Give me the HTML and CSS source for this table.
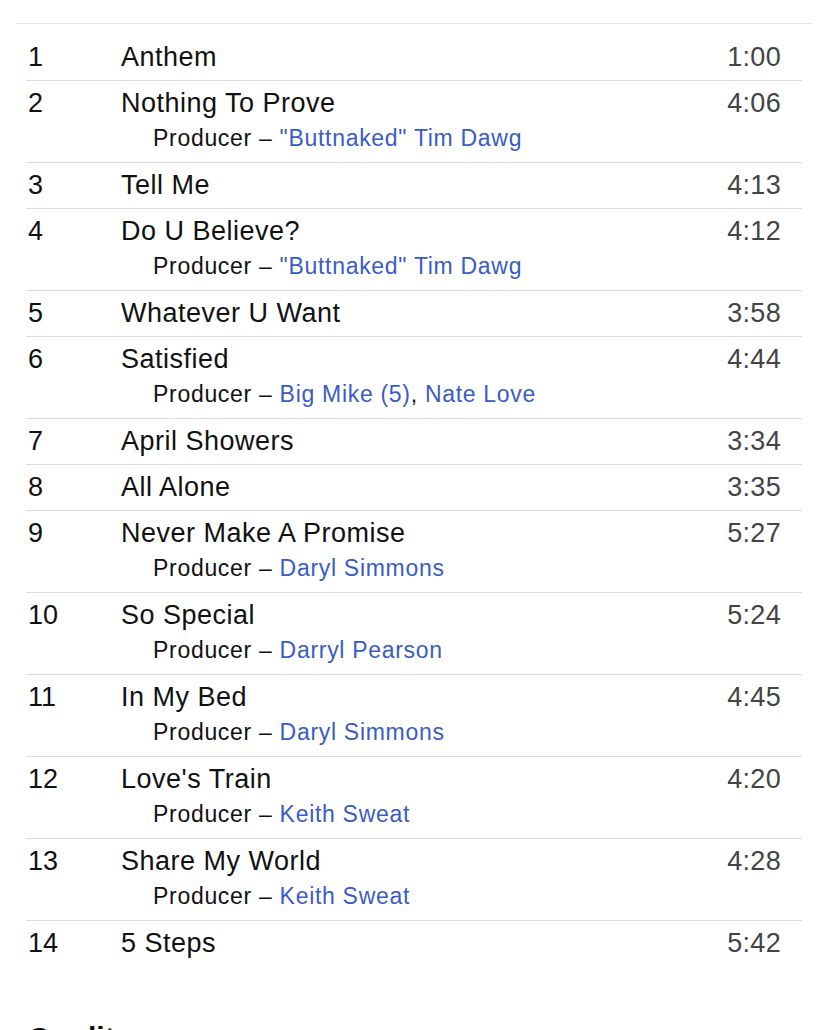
FILE: index.html
```
<!DOCTYPE html>
<html lang="en">
<head>
    <meta charset="UTF-8">
    <meta name="viewport" content="width=device-width, initial-scale=1.0">
    <title>Tracklist</title>
    <link rel="stylesheet" href="styles.css">
</head>
<body>

<div class="tracklist">
    <div class="track">
        <span class="pos">1</span>
        <div class="info"><div class="title">Anthem</div></div>
        <span class="duration">1:00</span>
    </div>
    <div class="track">
        <span class="pos">2</span>
        <div class="info">
            <div class="title">Nothing To Prove</div>
            <div class="credit">Producer – <a href="#">"Buttnaked" Tim Dawg</a></div>
        </div>
        <span class="duration">4:06</span>
    </div>
    <div class="track">
        <span class="pos">3</span>
        <div class="info"><div class="title">Tell Me</div></div>
        <span class="duration">4:13</span>
    </div>
    <div class="track">
        <span class="pos">4</span>
        <div class="info">
            <div class="title">Do U Believe?</div>
            <div class="credit">Producer – <a href="#">"Buttnaked" Tim Dawg</a></div>
        </div>
        <span class="duration">4:12</span>
    </div>
    <div class="track">
        <span class="pos">5</span>
        <div class="info"><div class="title">Whatever U Want</div></div>
        <span class="duration">3:58</span>
    </div>
    <div class="track">
        <span class="pos">6</span>
        <div class="info">
            <div class="title">Satisfied</div>
            <div class="credit">Producer – <a href="#">Big Mike (5)</a>, <a href="#">Nate Love</a></div>
        </div>
        <span class="duration">4:44</span>
    </div>
    <div class="track">
        <span class="pos">7</span>
        <div class="info"><div class="title">April Showers</div></div>
        <span class="duration">3:34</span>
    </div>
    <div class="track">
        <span class="pos">8</span>
        <div class="info"><div class="title">All Alone</div></div>
        <span class="duration">3:35</span>
    </div>
    <div class="track">
        <span class="pos">9</span>
        <div class="info">
            <div class="title">Never Make A Promise</div>
            <div class="credit">Producer – <a href="#">Daryl Simmons</a></div>
        </div>
        <span class="duration">5:27</span>
    </div>
    <div class="track">
        <span class="pos">10</span>
        <div class="info">
            <div class="title">So Special</div>
            <div class="credit">Producer – <a href="#">Darryl Pearson</a></div>
        </div>
        <span class="duration">5:24</span>
    </div>
    <div class="track">
        <span class="pos">11</span>
        <div class="info">
            <div class="title">In My Bed</div>
            <div class="credit">Producer – <a href="#">Daryl Simmons</a></div>
        </div>
        <span class="duration">4:45</span>
    </div>
    <div class="track">
        <span class="pos">12</span>
        <div class="info">
            <div class="title">Love's Train</div>
            <div class="credit">Producer – <a href="#">Keith Sweat</a></div>
        </div>
        <span class="duration">4:20</span>
    </div>
    <div class="track">
        <span class="pos">13</span>
        <div class="info">
            <div class="title">Share My World</div>
            <div class="credit">Producer – <a href="#">Keith Sweat</a></div>
        </div>
        <span class="duration">4:28</span>
    </div>
    <div class="track">
        <span class="pos">14</span>
        <div class="info"><div class="title">5 Steps</div></div>
        <span class="duration">5:42</span>
    </div>
</div>

<div class="credits">
    <h2>Credits</h2>
</div>

</body>
</html>
```

FILE: styles.css
```
body {
    font-family: "Liberation Sans", Arial, sans-serif;
    background-color: white;
    color: #111;
    margin: 0;
    padding: 0;
}

.tracklist {
    margin: 23px 16px 0;
    padding: 11px 10px 0;
    border-top: 1px solid #e3e3e3;
}

.track {
    display: grid;
    grid-template-columns: 93px 1fr auto;
    padding: 7px 21px 8px 2px;
    font-size: 27px;
    line-height: 30px;
}

.track + .track {
    border-top: 1px solid #dcdcdc;
}

.pos {
    color: #111;
}

.title {
    color: #111;
    letter-spacing: 0.5px;
}

.credit {
    font-size: 23px;
    line-height: 32px;
    letter-spacing: 0.7px;
    padding: 4px 0 0 32px;
    color: #111;
}

.credit a {
    color: #3a5cc5;
    text-decoration: none;
}

.duration {
    color: #444;
    letter-spacing: 0.3px;
}

.credits {
    margin: 55px 26px 0;
    padding-left: 2px;
}

.credits h2 {
    font-size: 30px;
    margin: 0;
    color: #111;
}
```
